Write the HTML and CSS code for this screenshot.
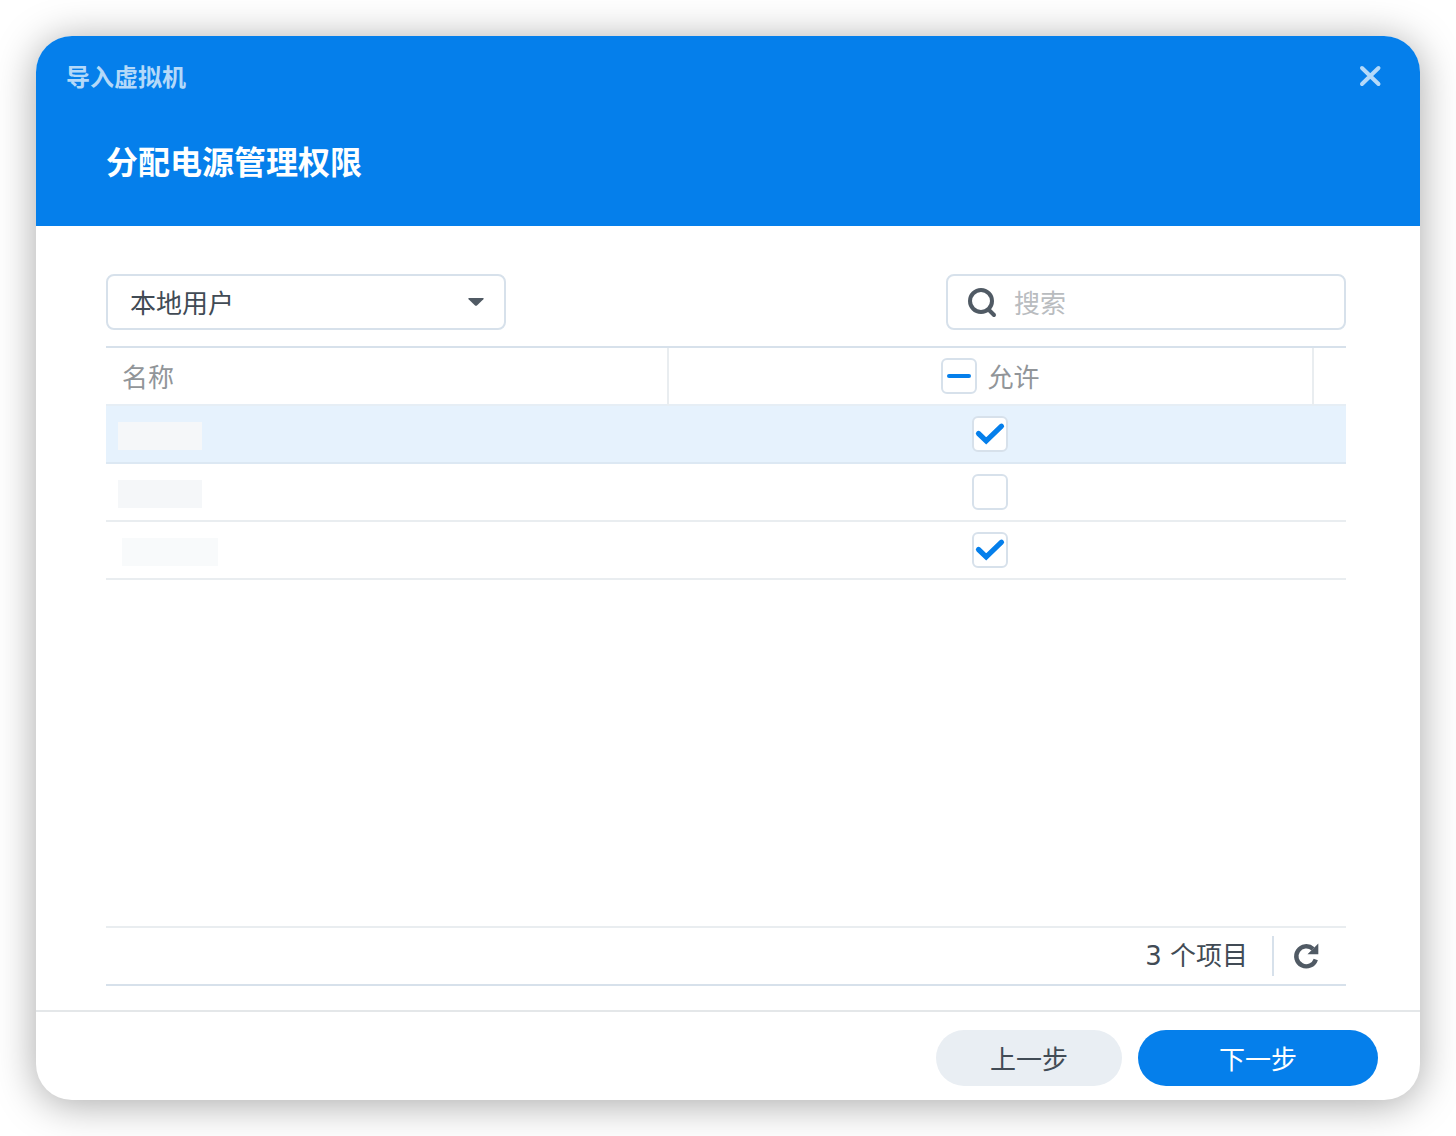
FILE: index.html
```html
<!DOCTYPE html>
<html lang="zh-CN">
<head>
  <meta charset="UTF-8">
  <meta name="viewport" content="width=device-width, initial-scale=1.0">
  <link rel="stylesheet" href="styles.css">
  <title>导入虚拟机</title>
</head>
<body>
  <div class="dialog" role="dialog" aria-labelledby="dialogTitle">
    <header class="dialog-header">
      <div class="title-bar">
        <span class="window-title" id="dialogTitle">导入虚拟机</span>
        <button type="button" class="close-btn" aria-label="关闭">
          <svg width="24" height="24" viewBox="0 0 24 24" fill="none" stroke="currentColor" stroke-width="4" stroke-linecap="round">
            <path d="M4 4 L20.5 20 M20.5 4 L4 20"/>
          </svg>
        </button>
      </div>
      <h1>分配电源管理权限</h1>
    </header>
    <main class="dialog-body">
      <div class="toolbar">
        <div class="select-box">
          <select id="userType" aria-label="用户类型">
            <option>本地用户</option>
          </select>
          <svg class="arrow" width="16" height="8" viewBox="0 0 16 8" fill="currentColor">
            <path d="M1 0 H15 Q16.4 0 15.4 1.2 L9.2 7.3 Q8 8.4 6.8 7.3 L.6 1.2 Q-.4 0 1 0Z"/>
          </svg>
        </div>
        <label class="search-box">
          <svg width="32" height="32" viewBox="0 0 32 32" fill="none" stroke="currentColor" stroke-width="4" stroke-linecap="round">
            <circle cx="15" cy="15" r="11"/>
            <path d="M23 24 L28 29"/>
          </svg>
          <input type="text" id="search" placeholder="搜索" aria-label="搜索">
        </label>
      </div>
      <table class="user-table">
        <colgroup>
          <col class="col-name">
          <col>
          <col class="col-end">
        </colgroup>
        <thead>
          <tr>
            <th class="name">名称</th>
            <th><label class="allow-all"><input type="checkbox" id="allowAll">允许</label></th>
            <td></td>
          </tr>
        </thead>
        <tbody id="userRows">
          <tr class="selected">
            <td class="name"><span class="masked"></span></td>
            <td class="allow"><input type="checkbox" aria-label="允许" checked></td>
            <td></td>
          </tr>
          <tr>
            <td class="name"><span class="masked"></span></td>
            <td class="allow"><input type="checkbox" aria-label="允许"></td>
            <td></td>
          </tr>
          <tr>
            <td class="name"><span class="masked wide"></span></td>
            <td class="allow"><input type="checkbox" aria-label="允许" checked></td>
            <td></td>
          </tr>
        </tbody>
      </table>
      <div class="status-bar">
        <span class="count">3 个项目</span>
        <button type="button" class="refresh-btn" aria-label="刷新">
          <svg width="28" height="28" viewBox="0 0 28 28">
            <path d="M23.8 17.5 A10 10 0 1 1 21 6.9" fill="none" stroke="currentColor" stroke-width="4.4"/>
            <path d="M26.3 1.5 V12.3 H15.5Z" fill="currentColor"/>
          </svg>
        </button>
      </div>
    </main>
    <footer class="dialog-footer">
      <button type="button" class="btn">上一步</button>
      <button type="button" class="btn primary">下一步</button>
    </footer>
  </div>
  <script>
    const allowAll = document.getElementById('allowAll');
    const boxes = document.querySelectorAll('#userRows input');
    function updateAllowAll() {
      const checked = [...boxes].filter(box => box.checked).length;
      allowAll.checked = checked === boxes.length;
      allowAll.indeterminate = checked > 0 && checked < boxes.length;
    }
    allowAll.addEventListener('change', function () {
      boxes.forEach(box => { box.checked = allowAll.checked; });
    });
    boxes.forEach(box => box.addEventListener('change', updateAllowAll));
    updateAllowAll();
  </script>
</body>
</html>
```
FILE: styles.css
```css
* {
  box-sizing: border-box;
}
body {
  margin: 0;
  padding: 36px;
  min-height: 100vh;
  display: flex;
  background-color: #fff;
  font-family: 'Noto Sans CJK SC', sans-serif;
  font-size: 26px;
  line-height: 36px;
  color: #414b55;
}
button, input, select {
  font: inherit;
  color: inherit;
  margin: 0;
}
button {
  border: none;
  cursor: pointer;
}
svg {
  display: block;
}
.dialog {
  flex: 1;
  display: flex;
  flex-direction: column;
  border-radius: 36px;
  overflow: hidden;
  background-color: #fff;
  box-shadow: 0 4px 40px rgba(0, 0, 0, 0.35);
}

/* header */
.dialog-header {
  background-color: #057feb;
  color: #fff;
  padding: 20px 30px 32px;
}
.title-bar {
  display: flex;
  justify-content: space-between;
  align-items: center;
}
.window-title {
  font-size: 24px;
  font-weight: bold;
  color: #b4d9f9;
}
.close-btn {
  padding: 8px;
  background: none;
  color: #b4d9f9;
}
h1 {
  margin: 30px 40px 0;
  font-size: 32px;
  line-height: 68px;
  font-weight: bold;
}

/* body */
.dialog-body {
  flex: 1;
  display: flex;
  flex-direction: column;
  padding: 48px 74px 24px 70px;
}
.toolbar {
  display: flex;
  justify-content: space-between;
  margin-bottom: 16px;
}
.select-box, .search-box {
  width: 400px;
  height: 56px;
  border: 2px solid #d7e1eb;
  border-radius: 8px;
}
.select-box {
  display: grid;
  align-items: center;
}
.select-box select {
  grid-area: 1 / 1;
  height: 100%;
  padding: 0 22px;
  border: none;
  background: none;
  appearance: none;
}
.select-box .arrow {
  grid-area: 1 / 1;
  justify-self: end;
  margin-right: 20px;
  pointer-events: none;
  color: #505a64;
}
.search-box {
  display: flex;
  align-items: center;
  gap: 16px;
  padding: 0 18px;
  color: #505a64;
}
.search-box input {
  flex: 1;
  min-width: 0;
  padding: 0;
  border: none;
  outline: none;
  background: none;
}
.search-box input::placeholder {
  color: #b9bcbf;
}

/* table */
.user-table {
  width: 100%;
  table-layout: fixed;
  border-collapse: separate;
  border-spacing: 0;
  border-top: 2px solid #d7e1eb;
}
.col-name {
  width: 45.4%;
}
.col-end {
  width: 32px;
}
.user-table th, .user-table td {
  height: 58px;
  padding: 0;
  text-align: center;
  border-bottom: 2px solid #e9edf0;
}
.user-table th {
  font-weight: normal;
  color: #919599;
  border-right: 2px solid #e9edf0;
}
.user-table .name {
  padding-left: 12px;
  text-align: left;
}
.user-table th.name {
  padding-left: 16px;
}
.user-table .allow {
  padding-right: 2px;
}
.user-table .selected td {
  background-color: #e6f2fd;
  border-bottom-color: #dce8f3;
}
.user-table thead th, .user-table thead td {
  border-bottom-color: #e6eef5;
}
.allow-all {
  display: flex;
  justify-content: center;
  align-items: center;
  gap: 10px;
}
input[type="checkbox"] {
  display: block;
  width: 36px;
  height: 36px;
  margin: 0 auto;
  border: 2px solid #d7e1eb;
  border-radius: 6px;
  background: #fff center / 36px 36px no-repeat border-box;
  appearance: none;
}
.allow-all input[type="checkbox"] {
  margin: 0;
}
input[type="checkbox"]:checked {
  background-image: url("data:image/svg+xml,%3Csvg xmlns='http://www.w3.org/2000/svg' viewBox='0 0 36 36'%3E%3Cpath d='M6.5 17.5 L14.2 24.8 L29.5 10.2' fill='none' stroke='%23057feb' stroke-width='5.2' stroke-linecap='round'/%3E%3C/svg%3E");
}
input[type="checkbox"]:indeterminate {
  background-image: url("data:image/svg+xml,%3Csvg xmlns='http://www.w3.org/2000/svg' viewBox='0 0 36 36'%3E%3Cpath d='M8 18 H28' fill='none' stroke='%23057feb' stroke-width='4' stroke-linecap='round'/%3E%3C/svg%3E");
}
.masked {
  display: block;
  width: 84px;
  height: 28px;
  margin-top: 4px;
  background-color: #f5f7f9;
}
.masked.wide {
  width: 96px;
  margin-left: 4px;
  background-color: #f8fafb;
}

/* item count */
.status-bar {
  display: flex;
  justify-content: flex-end;
  align-items: center;
  height: 60px;
  margin-top: auto;
  border-top: 2px solid #e9edf0;
  border-bottom: 2px solid #d7e1eb;
}
.count {
  padding-right: 24px;
  font-family: 'DejaVu Sans', 'Noto Sans CJK SC', sans-serif;
}
.refresh-btn {
  height: 40px;
  padding: 0 26px 0 18px;
  border-left: 2px solid #d7e1eb;
  background: none;
  color: #505a64;
}

/* footer */
.dialog-footer {
  display: flex;
  justify-content: flex-end;
  gap: 16px;
  padding: 18px 42px 14px;
  border-top: 2px solid #e4e7e9;
}
.btn {
  width: 186px;
  height: 56px;
  border-radius: 28px;
  background-color: #e9eef3;
}
.btn.primary {
  width: 240px;
  background-color: #057feb;
  color: #fff;
}
```
